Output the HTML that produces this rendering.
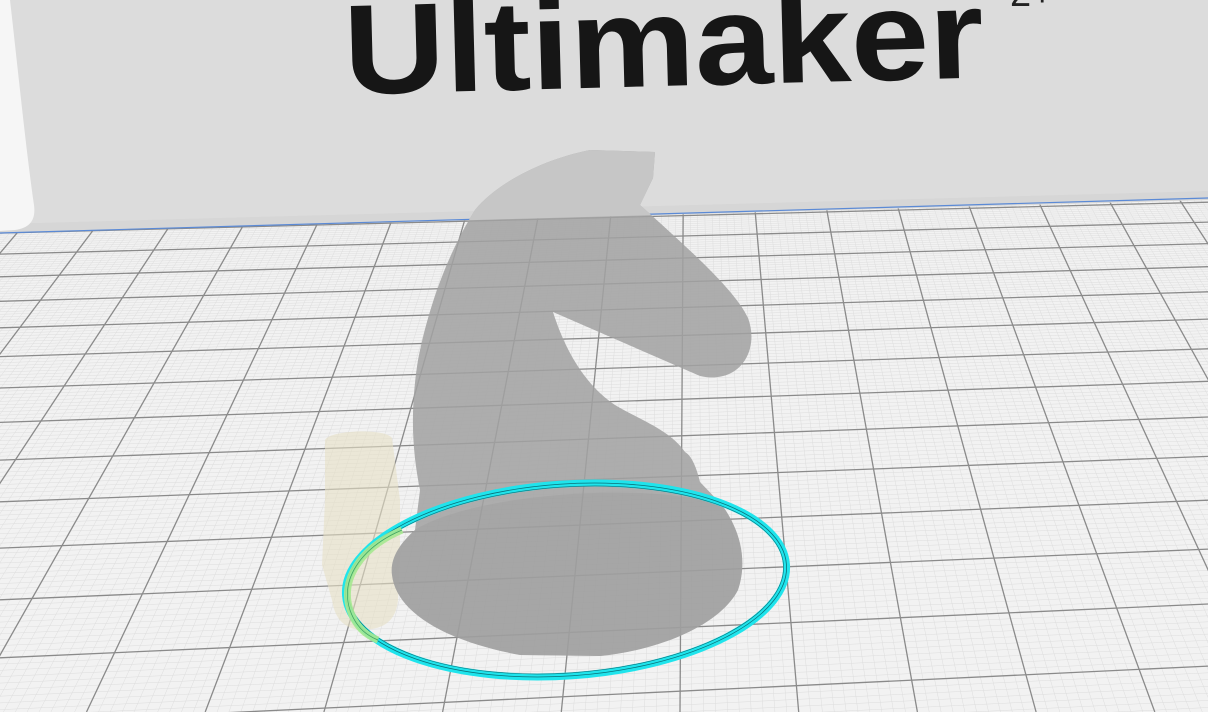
<!DOCTYPE html>
<html><head><meta charset="utf-8"><style>
html,body{margin:0;padding:0;background:#f2f2f2;overflow:hidden;width:1208px;height:712px}
svg{display:block}
</style></head><body>
<svg id="s" width="1208" height="712" viewBox="0 0 1208 712" xmlns="http://www.w3.org/2000/svg">
<defs>
<clipPath id="floor"><polygon points="0,233 1208,200 1208,712 0,712"/></clipPath>
<clipPath id="wall"><polygon points="0,0 1208,0 1208,200 0,233"/></clipPath>
<path id="kp" d="M655,152 L590,150 C540,160 495,185 475,210 C450,250 430,300 418,360 C410,410 412,450 420,490 L415,530 C398,545 390,560 392,575 C396,610 440,640 520,655 L600,656 C660,650 720,625 738,590 C748,560 740,530 722,505 L700,482 C695,462 690,455 685,452 C670,430 640,420 615,405 C585,385 565,350 553,312 L700,376 C740,385 760,350 748,318 C735,290 690,250 640,205 L653,178 Z"/>
</defs>
<rect width="1208" height="712" fill="#f2f2f2"/>
<polygon points="0,0 1208,0 1208,200 0,233" fill="#dcdcdc"/>
<polygon points="0,224 1208,191 1208,200 0,233" fill="#d6d6d6"/>
<path d="M0,0 L10,0 C18,70 26,150 34,205 C36,220 30,228 15,230 L0,231 Z" fill="#f6f6f6"/>
<g transform="rotate(-1.5 660 60)">
<text x="344" y="86" font-family="'Liberation Sans',sans-serif" font-weight="bold" font-size="128" fill="#161616" textLength="640" lengthAdjust="spacingAndGlyphs">Ultimaker</text>
</g>
<text x="1010" y="6" font-family="'Liberation Sans',sans-serif" font-size="38" fill="#222">2+</text>
<g id="grid" clip-path="url(#floor)"></g>
<line x1="0" y1="233" x2="1208" y2="198" stroke="#5b8ad6" stroke-width="1.2"/>
<path d="M325,440 C330,430 385,428 392,438 L400,500 L400,560 L398,600 C396,620 385,630 360,630 C345,628 335,620 332,600 L322,565 L325,500 Z" fill="#e6dfc4" opacity="0.6"/>
<use href="#kp" fill="#a2a2a2" opacity="0.86"/>
<g clip-path="url(#wall)"><use href="#kp" fill="#c6c6c6"/></g>
<path d="M415,530 C470,495 640,480 722,505 C740,530 748,560 738,590 C720,625 660,650 600,656 L520,655 C440,640 396,610 392,575 C390,560 398,545 415,530 Z" fill="#9c9c9c" opacity="0.4"/>
<g transform="rotate(-4 566 580)">
<ellipse cx="566" cy="580" rx="221" ry="96" fill="none" stroke="#1fe4ec" stroke-width="7"/>
<ellipse cx="566" cy="580" rx="221" ry="96" fill="none" stroke="#0b7078" stroke-width="0.8"/>
<ellipse cx="566" cy="580" rx="218" ry="93" fill="none" stroke="#0b7078" stroke-width="0.6"/>
</g>
<path d="M402,530 C360,548 340,580 350,610 C355,625 365,635 378,640" fill="none" stroke="#a6e890" stroke-width="7" opacity="0.9"/>
<path d="M402,530 C360,548 340,580 350,610 C355,625 365,635 378,640" fill="none" stroke="#3aa060" stroke-width="0.7"/>
</svg>
<script>
(function(){
var g=document.getElementById('grid'),h='';
var vx=688,vy=-560;
function vline(x0,c,w){
 var s=(x0-vx)/(233-vy);
 var xa=x0+s*(190-233), xb=x0+s*(712-233);
 h+='<line x1="'+xa.toFixed(1)+'" y1="190" x2="'+xb.toFixed(1)+'" y2="712" stroke="'+c+'" stroke-width="'+w+'"/>';
}
var hx=22400,hy=-340;
function hline(y0,c,w){
 var s=(hy-y0)/hx;
 h+='<line x1="0" y1="'+y0.toFixed(1)+'" x2="1208" y2="'+(y0+s*1208).toFixed(1)+'" stroke="'+c+'" stroke-width="'+w+'"/>';
}
var k,m,v;
for(k=-30;k<=40;k++){for(m=1;m<10;m++)vline(17+74*k+7.4*m,'#dddddd',0.5);}
for(k=0;k<=16;k++){for(m=1;m<10;m++){var n=k+m/10;v=0.001745-n*0.0000619;if(v>0.0006)hline(-340+1/v,'#dddddd',0.5);}}
for(k=-30;k<=40;k++)vline(17+74*k,'#8a8a8a',1.3);
for(k=0;k<=16;k++){v=0.001745-k*0.0000619;if(v>0.0006)hline(-340+1/v,'#8a8a8a',1.3);}
g.innerHTML=h;
})();
</script>
</body></html>
